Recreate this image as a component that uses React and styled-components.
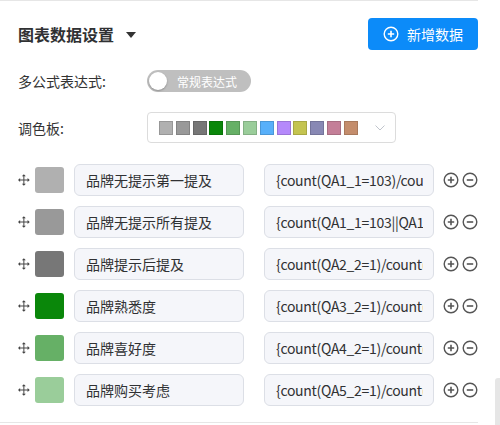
import styled, { createGlobalStyle } from "styled-components";

const GlobalStyle = createGlobalStyle`
  html, body {
    margin: 0;
    padding: 0;
    background: #fff;
    font-family: "Noto Sans CJK SC", "Noto Sans", sans-serif;
    overflow: hidden;
  }
`;

const Panel = styled.section`
  width: 478px;
  box-sizing: border-box;
  padding: 17px 0 16px 18px;
  border-top: 1px solid #e6e6e6;
  border-bottom: 1px solid #e6e6e6;
  color: #333;
`;

const Header = styled.div`
  display: flex;
  align-items: center;
  justify-content: space-between;
  height: 32px;
`;

const Title = styled.h2`
  margin: 0;
  display: flex;
  align-items: center;
  gap: 12px;
  font-size: 16px;
  font-weight: 700;
  color: #303133;
`;

const Caret = styled.span`
  width: 0;
  height: 0;
  border-left: 5px solid transparent;
  border-right: 5px solid transparent;
  border-top: 6px solid #333;
  margin-top: 1px;
`;

const AddButton = styled.button`
  display: flex;
  align-items: center;
  justify-content: center;
  gap: 8px;
  width: 110px;
  height: 32px;
  border: none;
  border-radius: 4px;
  background: #0c8bf9;
  color: #fff;
  font-family: inherit;
  font-size: 14px;
  cursor: pointer;
  padding: 0;
`;

const FieldRow = styled.div`
  display: flex;
  align-items: center;
  margin-top: ${(p) => p.$gap}px;
`;

const Label = styled.span`
  width: 129px;
  font-size: 14px;
  color: #333;
`;

const Switch = styled.div`
  position: relative;
  display: flex;
  align-items: center;
  width: 104px;
  height: 22px;
  border-radius: 11px;
  background: #bfbfbf;
  box-sizing: border-box;
  padding: 0 14px 0 30px;
  justify-content: center;
`;

const Knob = styled.span`
  position: absolute;
  left: 2px;
  top: 2px;
  width: 18px;
  height: 18px;
  border-radius: 50%;
  background: #fff;
  box-shadow: 0 1px 2px rgba(0, 0, 0, 0.25);
`;

const SwitchText = styled.span`
  font-size: 12px;
  color: #fff;
`;

const PaletteSelect = styled.div`
  display: flex;
  align-items: center;
  width: 249px;
  height: 31px;
  box-sizing: border-box;
  border: 1px solid #dcdcdc;
  border-radius: 4px;
  padding: 0 10px 0 11px;
`;

const Swatches = styled.div`
  display: flex;
  gap: 2.8px;
  flex: 1;
`;

const Swatch = styled.span`
  width: 14px;
  height: 14px;
  box-sizing: border-box;
  background: ${(p) => p.$color};
  border: 1px solid rgba(0, 0, 0, 0.14);
`;

const List = styled.div`
  display: flex;
  flex-direction: column;
  gap: 10px;
  margin-top: 21px;
`;

const DataRow = styled.div`
  display: flex;
  align-items: center;
  height: 32px;
`;

const ColorBlock = styled.span`
  width: 30px;
  height: 26px;
  border-radius: 3px;
  margin-left: 5px;
  background: ${(p) => p.$color};
`;

const TextInput = styled.input`
  width: 170px;
  height: 32px;
  box-sizing: border-box;
  margin-left: ${(p) => p.$offset}px;
  padding: 0 10px 0 11px;
  border: 1px solid #dcdfe6;
  border-radius: 6px;
  background: #f5f6fa;
  font-family: "Noto Sans CJK SC", "Noto Sans", sans-serif;
  font-size: 14px;
  letter-spacing: ${(p) => (p.$formula ? "-0.3px" : "0")};
  color: #303133;
  outline: none;
`;

const Actions = styled.div`
  display: flex;
  gap: 3px;
  margin-left: 9px;
`;

const IconButton = styled.span`
  display: flex;
  width: 16px;
  height: 16px;
  cursor: pointer;
`;

const ScrollThumb = styled.div`
  position: fixed;
  right: 0;
  top: 378px;
  width: 5px;
  height: 60px;
  border-radius: 3px 0 0 0;
  background: #e6e6e6;
`;

const PlusCircle = ({ color = "#fff", size = 16 }) => (
  <svg width={size} height={size} viewBox="0 0 16 16" fill="none">
    <circle cx="8" cy="8" r="6.8" stroke={color} strokeWidth="1.4" />
    <path d="M8 4.8v6.4M4.8 8h6.4" stroke={color} strokeWidth="1.6" />
  </svg>
);

const MinusCircle = ({ color }) => (
  <svg width="16" height="16" viewBox="0 0 16 16" fill="none">
    <circle cx="8" cy="8" r="6.8" stroke={color} strokeWidth="1.4" />
    <path d="M4.8 8h6.4" stroke={color} strokeWidth="1.6" />
  </svg>
);

const MoveIcon = () => (
  <svg width="12" height="12" viewBox="0 0 12 12" fill="#444">
    <rect x="5.5" y="1.5" width="1" height="9" />
    <rect x="1.5" y="5.5" width="9" height="1" />
    <polygon points="6,0 4,2.2 8,2.2" />
    <polygon points="6,12 4,9.8 8,9.8" />
    <polygon points="0,6 2.2,4 2.2,8" />
    <polygon points="12,6 9.8,4 9.8,8" />
  </svg>
);

const Chevron = () => (
  <svg width="10" height="6" viewBox="0 0 10 6" fill="none">
    <path d="M0.5 0.5L5 5L9.5 0.5" stroke="#c0c4cc" strokeWidth="1" />
  </svg>
);

const palette = [
  "#b0b0b0",
  "#999999",
  "#777777",
  "#0a870a",
  "#66b066",
  "#9acd9a",
  "#58b0fa",
  "#b589fb",
  "#c4c450",
  "#8888b4",
  "#c47f98",
  "#c48d6c",
];

const rows = [
  { name: "品牌无提示第一提及", formula: "{count(QA1_1=103)/count(QA1_1)}" },
  { name: "品牌无提示所有提及", formula: "{count(QA1_1=103||QA1_2=103)/count(QA1_1)}" },
  { name: "品牌提示后提及", formula: "{count(QA2_2=1)/count(QA2_2)}" },
  { name: "品牌熟悉度", formula: "{count(QA3_2=1)/count(QA3_2)}" },
  { name: "品牌喜好度", formula: "{count(QA4_2=1)/count(QA4_2)}" },
  { name: "品牌购买考虑", formula: "{count(QA5_2=1)/count(QA5_2)}" },
];

const App = () => (
  <>
    <GlobalStyle />
    <Panel>
      <Header>
        <Title>
          图表数据设置
          <Caret />
        </Title>
        <AddButton>
          <PlusCircle />
          新增数据
        </AddButton>
      </Header>

      <FieldRow $gap={20}>
        <Label>多公式表达式:</Label>
        <Switch>
          <Knob />
          <SwitchText>常规表达式</SwitchText>
        </Switch>
      </FieldRow>

      <FieldRow $gap={20}>
        <Label>调色板:</Label>
        <PaletteSelect>
          <Swatches>
            {palette.map((c) => (
              <Swatch key={c} $color={c} />
            ))}
          </Swatches>
          <Chevron />
        </PaletteSelect>
      </FieldRow>

      <List>
        {rows.map((r, i) => (
          <DataRow key={r.name}>
            <MoveIcon />
            <ColorBlock $color={palette[i]} />
            <TextInput $offset={10} defaultValue={r.name} />
            <TextInput $offset={20} $formula defaultValue={r.formula} />
            <Actions>
              <IconButton>
                <PlusCircle color="#555" />
              </IconButton>
              <IconButton>
                <MinusCircle color="#555" />
              </IconButton>
            </Actions>
          </DataRow>
        ))}
      </List>
    </Panel>
    <ScrollThumb />
  </>
);

export default App;
